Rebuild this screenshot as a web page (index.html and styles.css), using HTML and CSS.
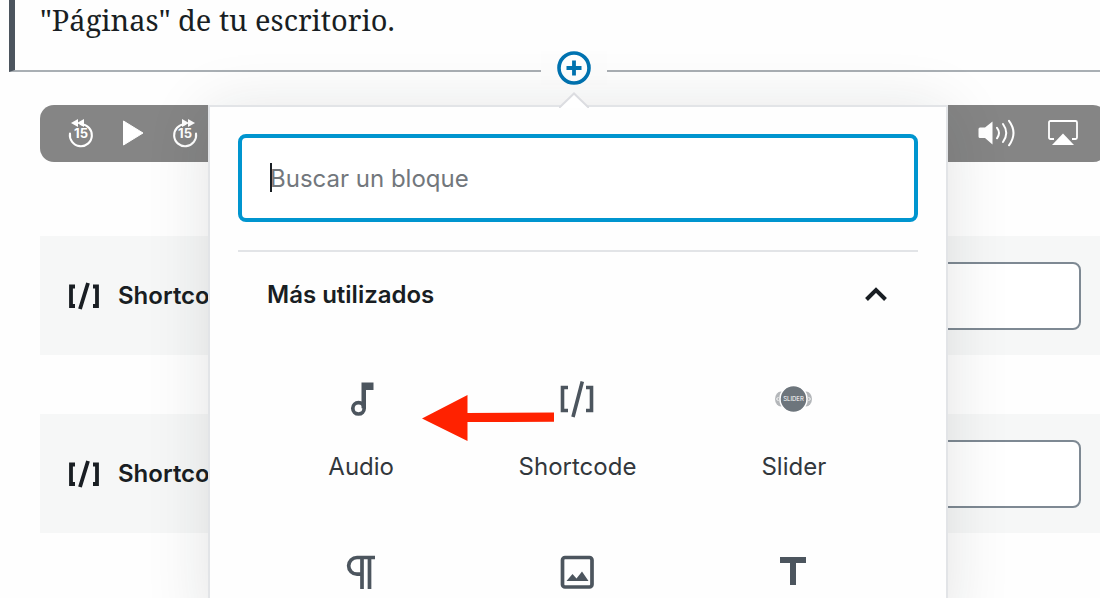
FILE: index.html
```html
<!DOCTYPE html>
<html lang="es">
<head>
<meta charset="utf-8">
<title>Editor de bloques</title>
<link rel="stylesheet" href="styles.css">
</head>
<body>
<main class="editor">
  <section class="quote">
    <p class="quote-text">"Páginas" de tu escritorio.</p>
    <div class="inserter">
      <button class="inserter-button" type="button" aria-label="Añadir bloque" aria-expanded="true">
        <svg width="34" height="34" viewBox="0 0 34 34"><circle cx="17" cy="17" r="15" fill="#fff" stroke="#0073b1" stroke-width="3.6"/><path d="M17 9.500v15M9.500 17h15" stroke="#0073b1" stroke-width="3.800"/></svg>
      </button>
    </div>
  </section>

  <div class="blocks">
    <div class="player">
      <div class="player-group">
        <button class="player-button" type="button" aria-label="Retroceder 15 segundos">
          <svg width="28" height="30" viewBox="0 0 28 30"><path d="M3 15.500A11 11 0 1 0 14 6.200" fill="none" stroke="#fff" stroke-width="2.100" stroke-linecap="round"/><path d="M4 5l7-4v8zM10 5l7-4v8z" fill="#fff"/><text class="skip-label" x="14" y="20" text-anchor="middle">15</text></svg>
        </button>
        <button class="player-button" type="button" aria-label="Reproducir">
          <svg width="22" height="26" viewBox="0 0 22 26"><path d="M1.500 1v24L21 13z" fill="#fff" stroke="#fff" stroke-linejoin="round"/></svg>
        </button>
        <button class="player-button" type="button" aria-label="Avanzar 15 segundos">
          <svg width="28" height="30" viewBox="0 0 28 30"><path d="M25 15.500A11 11 0 1 1 14 6.200" fill="none" stroke="#fff" stroke-width="2.100" stroke-linecap="round"/><path d="M24 5l-7-4v8zM18 5l-7-4v8z" fill="#fff"/><text class="skip-label" x="14" y="20" text-anchor="middle">15</text></svg>
        </button>
      </div>
      <div class="player-group player-group-end">
        <button class="player-button" type="button" aria-label="Volumen">
          <svg width="40" height="28" viewBox="0 0 40 28"><path d="M3 8.500h5L15.500 2.500v23L8 19H3q-1.500 0-1.500-1.500V10q0-1.500 1.500-1.500z" fill="#fff"/><path d="M20 8.800q4 5 0 10.500M26 5q6.500 9 0 18M32 1.800q9 12 0 24.500" fill="none" stroke="#fff" stroke-width="2" stroke-linecap="round"/></svg>
        </button>
        <button class="player-button" type="button" aria-label="AirPlay">
          <svg width="30" height="26" viewBox="0 0 30 26"><path d="M6 19H2.500Q1 19 1 17.500V2.500Q1 1 2.500 1h25Q29 1 29 2.500v15Q29 19 27.500 19H24" fill="none" stroke="#fff" stroke-width="1.800"/><path d="M15 13.500L26 25H4z" fill="#fff"/></svg>
        </button>
      </div>
    </div>

    <div class="shortcode">
      <label class="shortcode-label" for="code-a">
        <svg width="32" height="28" viewBox="0 0 32 28"><path d="M7 4.500H3v19.500h4M25 4.500H29v19.500h-4M20 1L12 27" fill="none" stroke="#191e23" stroke-width="3.800"/></svg>
        Shortcode
      </label>
      <input class="shortcode-input" id="code-a" type="text">
    </div>
    <div class="shortcode">
      <label class="shortcode-label" for="code-b">
        <svg width="32" height="28" viewBox="0 0 32 28"><path d="M7 4.500H3v19.500h4M25 4.500H29v19.500h-4M20 1L12 27" fill="none" stroke="#191e23" stroke-width="3.800"/></svg>
        Shortcode
      </label>
      <input class="shortcode-input" id="code-b" type="text">
    </div>
  </div>

  <div class="popover" role="dialog" aria-label="Añadir bloque">
    <svg class="popover-tip" width="30" height="16" viewBox="0 0 30 16"><path d="M1 16L15 2l14 14z" fill="#fff"/><path d="M0 15h1L15 1.500 29 15h1" fill="none" stroke="#dcdde1" stroke-width="2"/></svg>
    <div class="search">
      <input class="search-input" type="search" placeholder="Buscar un bloque" aria-label="Buscar un bloque">
      <span class="search-caret"></span>
    </div>
    <div class="panel">
      <h2 class="panel-title">
        <button class="panel-toggle" type="button" aria-expanded="true">
          Más utilizados
          <svg width="24" height="16" viewBox="0 0 24 16"><path d="M2.500 12.500L12 3l9.500 9.500" fill="none" stroke="#191e23" stroke-width="4"/></svg>
        </button>
      </h2>
      <div class="block-grid">
        <button class="block-item" type="button">
          <svg width="48" height="48" viewBox="0 0 48 48"><path d="M24.500 6.500H36.500V14H29V32.300h-4.500z" fill="#4c555e"/><circle cx="21.500" cy="32.300" r="5.700" fill="none" stroke="#4c555e" stroke-width="3.700"/></svg>
          Audio
        </button>
        <button class="block-item" type="button">
          <svg width="48" height="48" viewBox="0 0 48 48"><path d="M15 11.500H9.500v23H15M33 11.500H38.500v23H33M29.300 5.500L20 41" fill="none" stroke="#4c555e" stroke-width="3.600"/></svg>
          Shortcode
        </button>
        <button class="block-item" type="button">
          <svg width="48" height="48" viewBox="0 0 48 48"><ellipse cx="11" cy="23" rx="6" ry="7.500" fill="#b4b7ba"/><ellipse cx="36" cy="23" rx="6" ry="7.500" fill="#b4b7ba"/><path d="M8.500 21l-2 2 2 2M38.500 21l2 2-2 2" fill="none" stroke="#fff"/><circle cx="23.500" cy="23" r="13.500" fill="#6d757c" stroke="#fff" stroke-width="1.500"/><text class="slider-mark" x="23.500" y="25" text-anchor="middle">SLIDER</text></svg>
          Slider
        </button>
        <button class="block-item" type="button" aria-label="Párrafo">
          <svg width="48" height="48" viewBox="0 0 48 48"><path d="M38 9.500H20a8.300 8.300 0 0 0 0 16.700h6M25 9.500V41M32.500 9.500V41" fill="none" stroke="#4c555e" stroke-width="3.700"/></svg>
        </button>
        <button class="block-item" type="button" aria-label="Imagen">
          <svg width="48" height="48" viewBox="0 0 48 48"><rect x="9.500" y="9.500" width="29.500" height="29.500" rx="2.500" fill="none" stroke="#4c555e" stroke-width="3.700"/><path d="M13.500 33l6-7 4 4.500 5.500-7L35.500 33z" fill="#4c555e"/></svg>
        </button>
        <button class="block-item" type="button" aria-label="Encabezado">
          <svg width="48" height="48" viewBox="0 0 48 48"><path d="M10 9h26v6h-10v22h-6V15H10z" fill="#4c555e"/></svg>
        </button>
      </div>
      <svg class="pointer" width="132" height="46" viewBox="0 0 132 46"><path d="M0 23.500L45.500 0v18L132 17.500v9.300L45.500 27v19z" fill="#ff2200"/></svg>
    </div>
  </div>
</main>
</body>
</html>
```
FILE: styles.css
```css
* {
  box-sizing: border-box;
}

html,
body {
  margin: 0;
  height: 100%;
  overflow: hidden;
}

body {
  background: #fefefe;
  color: #191e23;
  font-family: Inter, "Liberation Sans", sans-serif;
  font-size: 24px;
  line-height: 32px;
}

button {
  border: 0;
  padding: 0;
  background: none;
  color: inherit;
  font: inherit;
}

svg {
  display: block;
  flex: none;
}

.editor {
  position: relative;
  margin: 0 -39px 0 9px;
}

.quote {
  position: relative;
  padding: 0 0 30px 25px;
  border-left: 6px solid #4c555e;
  border-bottom: 2px solid #a9afb4;
}

.quote-text {
  margin: 0;
  font-family: "Noto Serif", "DejaVu Serif Condensed", "DejaVu Serif", serif;
  font-size: 29px;
  line-height: 40px;
}

.inserter {
  position: absolute;
  left: -6px;
  right: 0;
  bottom: -15px;
  display: flex;
  justify-content: center;
}

.inserter-button {
  padding: 0 16px;
  background: #fdfdfd;
}

.blocks {
  display: flex;
  flex-direction: column;
  padding: 33px 32px 0 31px;
}

.player {
  display: flex;
  justify-content: space-between;
  align-items: center;
  height: 57px;
  margin-bottom: 74px;
  padding: 0 29px 2px 27px;
  border-radius: 14px;
  background: #858585;
}

.player-group {
  display: flex;
  align-items: center;
  gap: 27px;
}

.player-group-end {
  gap: 31px;
}

.skip-label {
  fill: #fff;
  font-size: 13px;
  font-weight: 700;
}

.shortcode {
  display: flex;
  align-items: center;
  gap: 28px;
  margin-bottom: 59px;
  padding: 26px 26px 25px 28px;
  background: #f6f7f7;
}

.shortcode-label {
  display: flex;
  align-items: center;
  gap: 18px;
  font-weight: 600;
}

.shortcode-input {
  flex: 1;
  height: 68px;
  border: 2px solid #7e8993;
  border-radius: 8px;
  background: #fff;
  font: inherit;
}

.popover {
  position: absolute;
  top: 105px;
  left: 199px;
  width: 740px;
  padding: 27px 28px 0;
  border: 2px solid #e2e4e7;
  background: #fefefe;
  box-shadow: 0 6px 60px rgba(25, 30, 35, 0.12);
}

.popover-tip {
  position: absolute;
  top: -15px;
  left: 349px;
}

.search {
  position: relative;
  padding-bottom: 28px;
  border-bottom: 2px solid #e2e4e7;
}

.search-input {
  display: block;
  width: 100%;
  height: 88px;
  padding: 0 28px;
  border: 4px solid #0095cf;
  border-radius: 8px;
  background: #fff;
  font: inherit;
}

.search-input::placeholder {
  color: #72777c;
  opacity: 1;
}

.search-caret {
  position: absolute;
  top: 29px;
  left: 32px;
  width: 2px;
  height: 29px;
  background: #191e23;
}

.panel {
  position: relative;
}

.panel-title {
  margin: 0;
  font-size: 24px;
  font-weight: 600;
}

.panel-toggle {
  display: flex;
  justify-content: space-between;
  align-items: center;
  width: 100%;
  padding: 27px 30px 27px 29px;
}

.block-grid {
  display: grid;
  grid-template-columns: repeat(3, 1fr);
  padding: 0 16px 0 15px;
}

.block-item {
  display: flex;
  flex-direction: column;
  align-items: center;
  gap: 27px;
  padding: 38px 0 27px;
  color: #32373c;
}

.slider-mark {
  fill: #fff;
  font-size: 6px;
}

.pointer {
  position: absolute;
  top: 143px;
  left: 184px;
}
```
